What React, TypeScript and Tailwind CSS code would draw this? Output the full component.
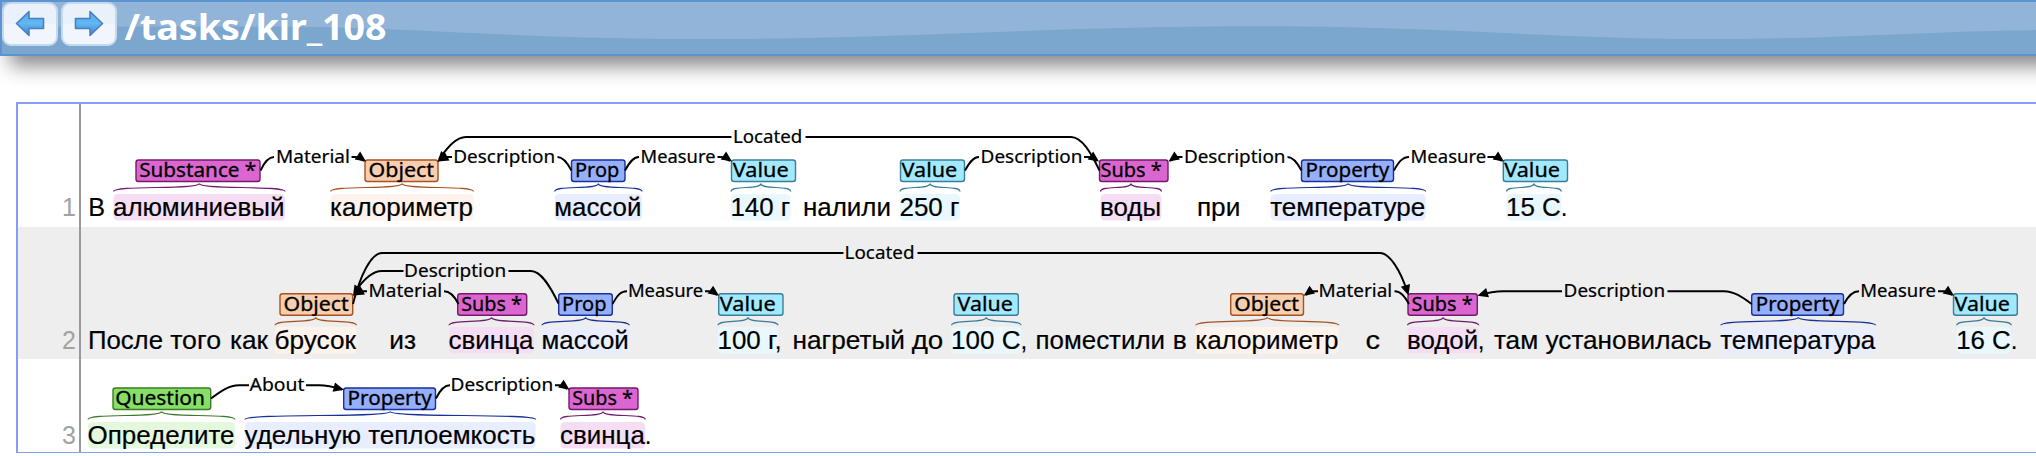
import React from "react";

type Kind = "substance" | "object" | "property" | "value" | "question";

const COLORS: Record<Kind, { fill: string; stroke: string; soft: string }> = {
  substance: { fill: "#db66d0", stroke: "#741a6c", soft: "#f5def4" },
  object: { fill: "#f7ceae", stroke: "#a8501f", soft: "#fdf2ec" },
  property: { fill: "#96affb", stroke: "#17309b", soft: "#e8edff" },
  value: { fill: "#a3e9fd", stroke: "#3a7f9a", soft: "#e9f8ff" },
  question: { fill: "#86e065", stroke: "#3c7a28", soft: "#e3f8dd" },
};

// [text, left ink edge, right ink edge]
type Word = [string, number, number];
// [kind, label, box left, box right, label left, label right, span left, span right, span text]
type Entity = [Kind, string, number, number, number, number, number, number, string];
// [label, left, right, baseline]
type ArcLabel = [string, number, number, number];
// [tip x, tip y, angle in degrees]
type Head = [number, number, number];

interface Row {
  n: number;
  top: number;
  height: number;
  base: number;
  span: number;
  box: number;
  words: Word[];
  entities: Entity[];
  labels: ArcLabel[];
  paths: string[];
  heads: Head[];
}

const rows: Row[] = [
  {
    n: 1, top: 104, height: 123, base: 216, span: 194, box: 160,
    words: [["В", 90, 104], ["налили", 804.7, 890], ["при", 1198.7, 1239.3], [".", 1563, 1566]],
    entities: [
      ["substance", "Substance *", 136, 260, 140.7, 255.3, 113.5, 285, "алюминиевый"],
      ["object", "Object", 365, 438, 370, 433, 330.5, 473.5, "калориметр"],
      ["property", "Prop", 571.5, 625, 576.5, 618.3, 554.7, 642, "массой"],
      ["value", "Value", 731.5, 795.5, 734.3, 787.7, 731, 790.7, "140 г"],
      ["value", "Value", 900.5, 964.5, 903, 956.3, 900, 960, "250 г"],
      ["substance", "Subs *", 1099.5, 1168, 1102, 1160.7, 1100.5, 1161.5, "воды"],
      ["property", "Property", 1301.5, 1393.5, 1307, 1388.3, 1270.7, 1425.7, "температуре"],
      ["value", "Value", 1503.3, 1567.5, 1505.7, 1559, 1506.5, 1561.3, "15 С"],
    ],
    labels: [
      ["Material", 277.5, 348.7, 163], ["Located", 734.3, 801, 143], ["Description", 454.7, 554, 163],
      ["Measure", 642, 714.3, 163], ["Description", 982, 1081.3, 163], ["Description", 1185.3, 1284.3, 163],
      ["Measure", 1412, 1485, 163],
    ],
    paths: [
      "M260.5 170.5C264 163 268 157 274 157", "M351.5 157H356L364 161",
      "M731.5 137H466C455 137 446 150 439 159", "M805.5 137H1071C1082 137 1091 153 1099.5 170.5",
      "M452 157H447L440 160", "M557.5 157C563 157 567.5 163 571.5 170.5",
      "M625 170.5C629 163 633 157 639 157", "M717.5 157H722L730 161",
      "M965 170.5C969 163 973 157 979 157", "M1084 157H1089L1097 161",
      "M1182.5 157H1177L1170 161", "M1287.5 157C1293 157 1297.5 163 1301.5 170.5",
      "M1394 170.5C1398 163 1402 157 1409 157", "M1487.5 157H1494L1502 161",
    ],
    heads: [[366, 161.5, 35], [437.5, 162, 133], [438, 161.5, 150], [732, 161.5, 35], [1099, 161.5, 35], [1168.5, 161.5, 145], [1504, 161.5, 35]],
  },
  {
    n: 2, top: 227, height: 132, base: 349, span: 327, box: 293.8,
    words: [
      ["После", 89.7, 162], ["того", 172, 220], ["как", 231.7, 267], ["из", 391, 415], [",", 777, 780.3],
      ["нагретый", 794.3, 904], ["до", 913.5, 942.3], [",", 1022.7, 1026], ["поместили", 1037.3, 1164], ["в", 1174.5, 1185.7],
      ["с", 1367.3, 1379], [",", 1480, 1483.5], ["там", 1495.7, 1537.3], ["установилась", 1547.3, 1710.7], [".", 2013, 2016],
    ],
    entities: [
      ["object", "Object", 280, 352.7, 285, 347.7, 275, 356.5, "брусок"],
      ["substance", "Subs *", 457.7, 526.7, 462.7, 521, 449, 534, "свинца"],
      ["property", "Prop", 558.7, 612.3, 563.5, 605.5, 542, 629.3, "массой"],
      ["value", "Value", 718.7, 783, 721.3, 774.7, 718, 778, "100 г"],
      ["value", "Value", 954, 1018.3, 959, 1011.7, 951.5, 1021, "100 С"],
      ["object", "Object", 1230.7, 1303.5, 1235.7, 1298, 1195.7, 1339, "калориметр"],
      ["substance", "Subs *", 1408, 1477.3, 1413, 1471.7, 1407.5, 1478.7, "водой"],
      ["property", "Property", 1751.7, 1843.5, 1757.3, 1838.3, 1720.7, 1875.7, "температура"],
      ["value", "Value", 1953.5, 2017.3, 1956, 2008.7, 1956.7, 2011.3, "16 С"],
    ],
    labels: [
      ["Located", 846, 913.3, 259], ["Description", 405.5, 505, 277], ["Material", 370, 441, 297], ["Measure", 629.3, 702, 297],
      ["Material", 1320, 1391, 297], ["Description", 1565, 1664, 297], ["Measure", 1861.7, 1934.7, 297],
    ],
    paths: [
      "M843.5 253H382C371 253 360 276 353 304", "M917.5 253H1380C1390 253 1401 272 1407 291",
      "M403.5 271H382C371 271 361 283 355 292", "M508.5 271H531C541 271 550 286 558.5 303.5",
      "M367 291.2H362L355 294", "M444 291.2C450 291.2 455 297 458.5 304",
      "M612.5 304C617 296 620 291.2 627 291.2", "M705 291.2H709L717 295",
      "M1318 291.2H1313L1306 295", "M1394.5 291.2C1401 291.2 1405 297 1409 304",
      "M1562 291.2H1503C1494 291.2 1488 292.5 1480 295", "M1667.5 291.2H1724C1734 291.2 1742 297 1751.7 304",
      "M1844 304C1848 296 1852 291.2 1859 291.2", "M1938 291.2H1944L1952 295",
    ],
    heads: [[1408.5, 295.5, 73], [353, 296, 122], [353.5, 295.5, 150], [719, 295.7, 35], [1303.7, 295.7, 145], [1477.5, 295.7, 163], [1954, 295.7, 35]],
  },
  {
    n: 3, top: 359, height: 93, base: 444, span: 422, box: 388,
    words: [[".", 647, 650]],
    entities: [
      ["question", "Question", 113, 210.7, 116.7, 204, 88, 235, "Определите"],
      ["property", "Property", 343.7, 435.5, 349, 430.7, 245, 535.7, "удельную теплоемкость"],
      ["substance", "Subs *", 569, 638, 573.7, 632, 560.5, 645.3, "свинца"],
    ],
    labels: [["About", 251, 303.3, 391], ["Description", 452, 552, 391]],
    paths: [
      "M211 398.5C221 391 229 385.3 239 385.3H249", "M306 385.3H319C328 385.3 334 387 342 389.5",
      "M436 398.5C440 390 444 385.3 450 385.3", "M555 385.3H560L567 389",
    ],
    heads: [[344, 389.7, 14], [569.5, 389.7, 35]],
  },
];

function Brace({ l, r, y, color }: { l: number; r: number; y: number; color: string }) {
  const m = (l + r) / 2;
  return (
    <path
      d={`M${l} ${y + 8}C${l} ${y + 1.6} ${m} ${y + 6.4} ${m} ${y}C${m} ${y + 6.4} ${r} ${y + 1.6} ${r} ${y + 8}`}
      fill="none" stroke={color} strokeWidth="1.2"
    />
  );
}

function RowView({ row }: { row: Row }) {
  const striped = row.n === 2;
  return (
    <div className={striped ? "flex bg-[#eeeeee]" : "flex bg-white"}>
      <svg width="2018" height={row.height} viewBox={`18 ${row.top} 2018 ${row.height}`} className="block shrink-0 overflow-visible">
        <rect x="79" y={row.top} width="2" height={row.height} fill="#999999" />
        <text x="76" y={row.base} textAnchor="end" fontSize="25" fill="#a2a2a2" className="font-['Liberation_Sans',sans-serif]">{row.n}</text>
        {row.entities.map((e, i) => {
          const c = COLORS[e[0]];
          return (
            <g key={i}>
              <rect x={e[6]} y={row.span} width={e[7] - e[6]} height="26.5" rx="4.5" fill={c.soft} />
              <rect x={e[2]} y={row.box} width={e[3] - e[2]} height="21.5" rx="2.5" fill={c.fill} stroke={c.stroke} strokeWidth="1.4" />
              <Brace l={e[6]} r={e[7]} y={row.box + 23.5} color={c.stroke} />
              <text x={e[4] - 1.5} y={row.box + 17} fontSize="19.5" textLength={e[5] - e[4] + 2.5} lengthAdjust="spacingAndGlyphs" stroke="#000" strokeWidth="0.3" className="font-['Noto_Sans',sans-serif]">{e[1]}</text>
              <text x={e[6] - 0.5} y={row.base} fontSize="26" textLength={e[7] - e[6]} lengthAdjust="spacingAndGlyphs" stroke="#000" strokeWidth="0.2" className="font-['Liberation_Sans',sans-serif]">{e[8]}</text>
            </g>
          );
        })}
        {row.words.map(([t, l, r], i) => {
          const mark = t === "." || t === ",";
          return mark ? (
            <text key={i} x={l - 2.4} y={row.base} fontSize="26" className="font-['Liberation_Sans',sans-serif]">{t}</text>
          ) : (
            <text key={i} x={l - 1.8} y={row.base} fontSize="26" textLength={r - l + 2.8} lengthAdjust="spacingAndGlyphs" stroke="#000" strokeWidth="0.2" className="font-['Liberation_Sans',sans-serif]">{t}</text>
          );
        })}
        {row.paths.map((d, i) => <path key={i} d={d} fill="none" stroke="#000" strokeWidth="1.9" />)}
        {row.heads.map(([x, y, a], i) => (
          <path key={i} d="M0 0L-10.5 4.8L-10.5 -4.8Z" transform={`translate(${x} ${y}) rotate(${a})`} />
        ))}
        {row.labels.map(([t, l, r, y], i) => (
          <text key={i} x={l - 1.4} y={y} fontSize="17.5" textLength={r - l + 2.6} lengthAdjust="spacingAndGlyphs" stroke="#000" strokeWidth="0.2" className="font-['Noto_Sans',sans-serif]">{t}</text>
        ))}
      </svg>
    </div>
  );
}

function ArrowButton({ flip, label }: { flip?: boolean; label: string }) {
  return (
    <button aria-label={label} className="flex h-[44px] w-[56px] items-center justify-center rounded-[9px] border-2 border-[#c5d9ec] bg-linear-to-b from-[#e9f1fa] from-50% to-[#f1f6fc] to-50%">
      <svg width="30" height="28" viewBox="0 0 30 28" className={flip ? "-scale-x-100" : ""}>
        <defs>
          <linearGradient id={flip ? "arrow-r" : "arrow-l"} x1="0" y1="0" x2="0" y2="1">
            <stop offset="0" stopColor="#55a6e6" />
            <stop offset="0.5" stopColor="#62b8f1" />
            <stop offset="1" stopColor="#3f83cd" />
          </linearGradient>
        </defs>
        <path d="M1.5 13.5L14 1.5V8.5H28.5V18.5H14V25.5Z" fill={flip ? "url(#arrow-r)" : "url(#arrow-l)"} stroke="#4a7fc3" strokeWidth="1.6" strokeLinejoin="round" />
      </svg>
    </button>
  );
}

export default function App() {
  return (
    <div className="h-[456px] w-[2036px] overflow-hidden bg-white text-black">
      <header className="relative h-[56px] w-[2060px] border-2 border-[#5b93d3] bg-[#7ba6ce] shadow-[10px_10px_20px_#888888]">
        <svg className="absolute inset-0" width="2056" height="52" viewBox="2 2 2056 52">
          <path d="M0 0H2060V30C1940 30 1850 39 1700 39C1560 39 1440 26.3 1260 26.3C1050 26.3 900 39 709 39C500 39 420 26.5 260 26.5H0Z" fill="#92b4d8" />
        </svg>
        <div className="relative flex h-full items-start gap-[3px]">
          <ArrowButton label="Previous" />
          <ArrowButton flip label="Next" />
          <svg width="280" height="52" className="ml-[3px] block">
            <text x="1.5" y="38" fontSize="36" fontWeight="700" fill="#fff" textLength="262" lengthAdjust="spacingAndGlyphs" className="font-['Noto_Sans',sans-serif]">/tasks/kir_108</text>
          </svg>
        </div>
      </header>
      <main className="relative mt-[46px] ml-4 w-[2030px] border-2 border-b border-[#859df6] bg-white">
        {rows.map((row) => <RowView key={row.n} row={row} />)}
      </main>
    </div>
  );
}
